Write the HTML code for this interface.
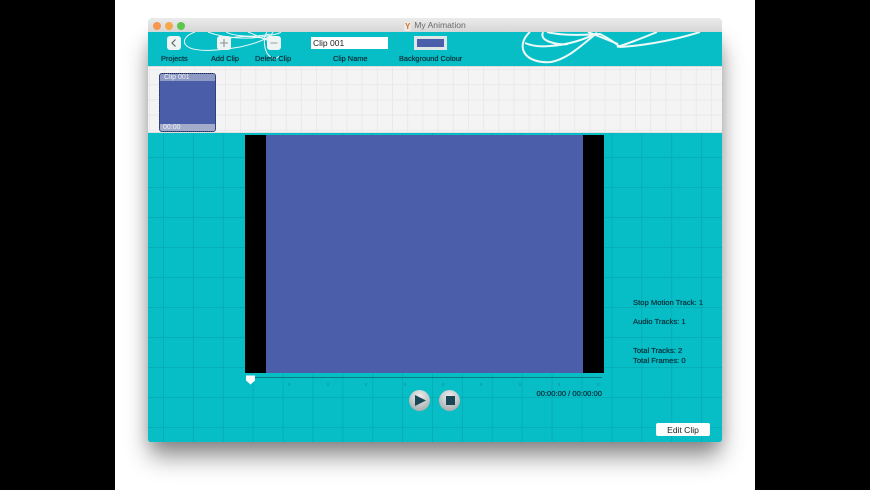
<!DOCTYPE html>
<html>
<head>
<meta charset="utf-8">
<style>
html,body{margin:0;padding:0;background:#000;}
body{width:870px;height:490px;position:relative;overflow:hidden;font-family:"Liberation Sans",sans-serif;}
#page{position:absolute;left:115px;top:0;width:640px;height:490px;background:#fff;overflow:hidden;}
#shadow{position:absolute;left:154px;top:40px;width:562px;height:402px;box-shadow:0 10px 24px 5px rgba(0,0,0,.42),0 0 14px 4px rgba(0,0,0,.14);border-radius:4px;}
#win{position:absolute;left:148px;top:18px;width:574px;height:424px;border-radius:5px 5px 3px 3px;overflow:hidden;background:#07bdc6;filter:blur(.28px);}
#title{position:absolute;left:0;top:0;width:574px;height:14px;background:linear-gradient(#ebebeb,#d6d6d6);text-align:center;font-size:8.6px;line-height:15px;color:#6a6a6a;}
.dot{position:absolute;top:4px;width:8px;height:8px;border-radius:50%;}
#tool{position:absolute;left:0;top:14px;width:574px;height:34px;background:#07bdc6;overflow:hidden;}
.grid{background-image:linear-gradient(90deg,rgba(0,100,110,.16) 1px,transparent 1px),linear-gradient(rgba(0,100,110,.16) 1px,transparent 1px);background-size:29.9px 30px;}
#strip{position:absolute;left:0;top:48px;width:574px;height:67px;background-color:#f4f4f4;background-image:linear-gradient(90deg,#e9e9e9 1px,transparent 1px),linear-gradient(#e9e9e9 1px,transparent 1px);background-size:15.2px 15.2px;background-position:1px 2px;border-top:1px solid #dcdcdc;box-sizing:border-box;border-bottom:1px solid #e0e0e0;}
#main{position:absolute;left:0;top:115px;width:574px;height:309px;background-color:#07bdc6;background-position:15px 24px;}
.lbl{position:absolute;top:36px;font-size:7.4px;line-height:9px;color:#07323c;text-align:center;white-space:nowrap;text-shadow:0 0 .5px #07323c;}
.btn{position:absolute;top:18px;width:14px;height:14px;background:#eef3f3;border-radius:3px;color:#6c7476;text-align:center;}
.info{position:absolute;left:485px;font-size:7.65px;line-height:9px;color:#07323c;white-space:nowrap;text-shadow:0 0 .5px #07323c;}
</style>
</head>
<body>
<div id="page"></div>
<div id="shadow"></div>
<div id="win">
  <div id="tool" class="grid" style="background-position:15px 8px"></div>
  <svg style="position:absolute;left:0;top:14px" width="574" height="34" fill="none" stroke="#eef9f9">
    <g stroke-width="1">
      <path d="M47 0C38 3 35 8 37 12C42 20 62 20 92 15C110 11 122 6 125 0"/>
      <path d="M60 0C75 6 100 8 119 4C130 2 132 1 133 0"/>
      <path d="M78 0C85 4 105 6 122 2"/>
      <path d="M119 0C115 6 116 15 119 21C123 27 128 28 131 24"/>
      <path d="M70 10C85 3 105 3 122 8"/>
      <path d="M100 0C112 5 125 10 132 16"/>
    </g>
    <g stroke-width="2">
      <path d="M382 0C375 6 373 14 376 20C380 28 392 31 403 30C420 27 435 12 449 1"/>
      <path d="M377 11C384 14 392 15 402 14C420 13 438 7 449 1"/>
      <path d="M395 0C393 5 396 8 402 10C408 12 414 13 420 12"/>
      <path d="M399 0C415 4 440 3 452 2C458 5 465 9 472 15C490 14 520 10 552 0"/>
      <path d="M469 15C485 10 497 5 509 0"/>
      <path d="M440 0C450 4 460 8 470 12"/>
    </g>
  </svg>
  <div id="strip"></div>
  <div id="main" class="grid"></div>

  <div id="title">
    <span style="display:inline-block;width:7px;height:9px;background:#efe9df;color:#c9763a;font-size:8px;line-height:9px;vertical-align:-1px;margin-right:3px;font-weight:bold">Y</span>My Animation
    <span class="dot" style="left:5px;background:#f7964c"></span>
    <span class="dot" style="left:17px;background:#f7a84c"></span>
    <span class="dot" style="left:29px;background:#5dc74e"></span>
  </div>

  <div class="btn" style="left:19px">
    <svg width="14" height="14" fill="none" stroke="#5f686a" stroke-width="1.2"><path d="M8.500 3.500L5 7L8.500 10.500"/></svg>
  </div>
  <div class="btn" style="left:69px">
    <svg width="14" height="14" fill="none" stroke="#8a9294" stroke-width="1.1"><path d="M7 3V11M3 7H11"/></svg>
  </div>
  <div class="btn" style="left:119px">
    <svg width="14" height="14" fill="none" stroke="#98a0a2" stroke-width="1.1"><path d="M3.500 7H10.500"/></svg>
  </div>
  <div class="lbl" style="left:13px">Projects</div>
  <div class="lbl" style="left:63px">Add Clip</div>
  <div class="lbl" style="left:107px">Delete Clip</div>
  <div class="lbl" style="left:185px">Clip Name</div>
  <div class="lbl" style="left:251px">Background Colour</div>

  <div style="position:absolute;left:163px;top:19px;width:77px;height:12px;background:#fff;font-size:8.500px;line-height:13px;color:#222;padding-left:2px;box-sizing:border-box">Clip 001</div>
  <div style="position:absolute;left:266px;top:18px;width:33px;height:14px;background:#4a5eaa;border:3px solid #dfe6e6;box-sizing:border-box"></div>

  <div style="position:absolute;left:11px;top:55px;width:57px;height:59px;background:#4a5da9;border:1px dotted #1c2a44;box-sizing:border-box;border-radius:3px;overflow:hidden">
    <div style="position:absolute;left:0;top:0;width:100%;height:7px;background:#8f9ac4;color:#eef0f6;font-size:7px;line-height:7px;padding-left:4px;box-sizing:border-box">Clip 001</div>
    <div style="position:absolute;left:0;bottom:0;width:100%;height:7px;background:#a3acca;color:#eef0f6;font-size:7px;line-height:8px;padding-left:3px;box-sizing:border-box">00:00</div>
  </div>

  <div style="position:absolute;left:97px;top:117px;width:359px;height:238px;background:#000"></div>
  <div style="position:absolute;left:118px;top:117px;width:317px;height:238px;background:#4a5ea9"></div>

  <div style="position:absolute;left:103px;top:359px;width:351px;height:1px;background:#067c85"></div>
  <svg style="position:absolute;left:97px;top:356px" width="12" height="12"><path d="M1 1.500H10V6.500L5.500 10.500L1 6.500Z" fill="#fff"/></svg>
  <svg style="position:absolute;left:139px;top:364px" width="320" height="6" stroke="#0a8d96" stroke-width=".8"><path d="M2 1V4M41 1V4M79 1V4M118 1V4M156 1V4M194 1V4M233 1V4M272 1V4M311 1V4"/></svg>

  <div style="position:absolute;left:261px;top:372px;width:21px;height:21px;border-radius:50%;background:radial-gradient(circle at 50% 30%,#eef0f0,#a4aaaa 85%)"></div>
  <svg style="position:absolute;left:261px;top:372px" width="21" height="21"><path d="M6 5L17 10.500L6 16Z" fill="#1a4755"/></svg>
  <div style="position:absolute;left:291px;top:372px;width:21px;height:21px;border-radius:50%;background:radial-gradient(circle at 50% 30%,#eef0f0,#a4aaaa 85%)"></div>
  <div style="position:absolute;left:298px;top:378px;width:9px;height:9px;background:#1a4755"></div>

  <div class="info" style="left:388.500px;top:371px;font-size:7.6px">00:00:00 / 00:00:00</div>
  <div class="info" style="top:280px">Stop Motion Track: 1</div>
  <div class="info" style="top:299px">Audio Tracks: 1</div>
  <div class="info" style="top:328px">Total Tracks: 2</div>
  <div class="info" style="top:338px">Total Frames: 0</div>
  <div style="position:absolute;left:508px;top:405px;width:54px;height:13px;background:#fbfcfc;border-radius:2px;text-align:center;font-size:8.5px;line-height:14px;color:#222">Edit Clip</div>
</div>
</body>
</html>
